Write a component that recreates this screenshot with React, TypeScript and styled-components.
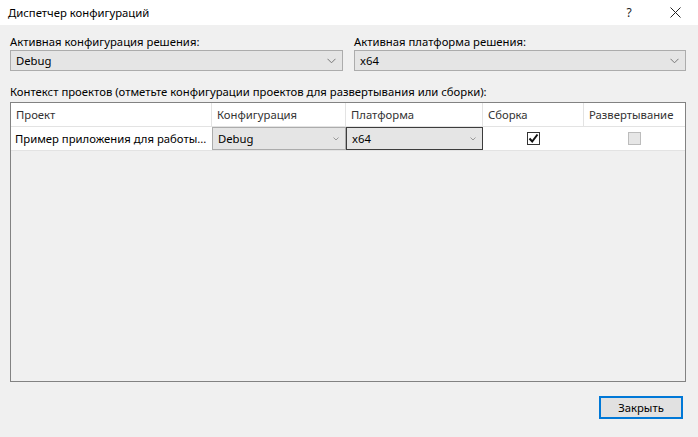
import React from "react";
import styled, { createGlobalStyle } from "styled-components";

const Global = createGlobalStyle`
  html, body { margin: 0; padding: 0; background: #f0f0f0; }
  body { font-family: "Noto Sans", "Open Sans", sans-serif; font-size: 11.3px; color: #000; }
  * { box-sizing: border-box; }
`;

const Window = styled.div`
  width: 698px;
  height: 437px;
  display: flex;
  flex-direction: column;
  background: #f0f0f0;
  overflow: hidden;
`;

const TitleBar = styled.div`
  height: 25px;
  background: #fff;
  display: flex;
  align-items: center;
  padding-left: 8px;
  font-size: 11.3px;
`;

const TitleText = styled.div`
  flex: 1;
`;

const TitleButton = styled.div<{ $w: number }>`
  width: ${(p) => p.$w}px;
  height: 25px;
  display: flex;
  align-items: center;
  justify-content: center;
  color: #222;
  font-size: 12px;
`;

const Body = styled.div`
  flex: 1;
  display: flex;
  flex-direction: column;
  padding: 8px 12px 0 10px;
`;

const TopRow = styled.div`
  display: grid;
  grid-template-columns: 333px 332px;
  column-gap: 11px;
`;

const Field = styled.div`
  display: flex;
  flex-direction: column;
`;

const Label = styled.div`
  height: 17px;
  line-height: 17px;
  white-space: nowrap;
`;

const Combo = styled.div<{ $dark?: boolean; $h?: number }>`
  height: ${(p) => p.$h ?? 21}px;
  flex: ${(p) => (p.$h ? 1 : "none")};
  background: #e5e5e5;
  border: 1px solid ${(p) => (p.$dark ? "#3c3c3c" : "#acacac")};
  display: flex;
  align-items: center;
  padding-left: 5px;
  padding-right: 6px;
  white-space: nowrap;
`;

const ComboText = styled.div`
  flex: 1;
`;

const ContextLabel = styled(Label)`
  margin-top: 12px;
`;

const Grid = styled.div`
  margin-top: 2px;
  height: 280px;
  border: 1px solid #828282;
  background: #f0f0f0;
  display: flex;
  flex-direction: column;
`;

const Row = styled.div<{ $h: number }>`
  display: grid;
  grid-template-columns: 201px 134px 137px 101px 1fr;
  height: ${(p) => p.$h}px;
  background: #fff;
  border-bottom: 1px solid #e3e3e3;
`;

const HeaderCell = styled.div<{ $last?: boolean }>`
  display: flex;
  align-items: center;
  padding-left: 5px;
  border-right: ${(p) => (p.$last ? "none" : "1px solid #e3e3e3")};
  color: #333;
  white-space: nowrap;
`;

const Cell = styled.div<{ $center?: boolean }>`
  display: flex;
  align-items: center;
  justify-content: ${(p) => (p.$center ? "center" : "flex-start")};
  padding-left: ${(p) => (p.$center ? 0 : 4)}px;
  white-space: nowrap;
  overflow: hidden;
`;

const CellCombo = styled.div`
  display: flex;
  align-items: stretch;
`;

const Check = styled.div<{ $disabled?: boolean }>`
  width: 13px;
  height: 13px;
  border: 1px solid ${(p) => (p.$disabled ? "#bcbcbc" : "#333")};
  background: ${(p) => (p.$disabled ? "#e6e6e6" : "#fff")};
  display: flex;
  align-items: center;
  justify-content: center;
`;

const Footer = styled.div`
  display: flex;
  justify-content: flex-end;
  padding: 14px 3px 0 0;
`;

const Button = styled.button`
  width: 84px;
  height: 23px;
  background: #e1e1e1;
  border: 2px solid #0078d7;
  font-family: inherit;
  font-size: 11.3px;
  color: #000;
  padding: 0;
`;

const Chevron = () => (
  <svg width="9" height="6" viewBox="0 0 9 6">
    <path d="M0.5 0.8 L4.5 4.8 L8.5 0.8" fill="none" stroke="#777" strokeWidth="1" />
  </svg>
);

const SmallChevron = () => (
  <svg width="6" height="4" viewBox="0 0 6 4">
    <path d="M0.5 0.5 L3 3 L5.5 0.5" fill="none" stroke="#999" strokeWidth="1" />
  </svg>
);

export default function App() {
  return (
    <>
      <Global />
      <Window>
        <TitleBar>
          <TitleText>Диспетчер конфигураций</TitleText>
          <TitleButton $w={46}>?</TitleButton>
          <TitleButton $w={46}>
            <svg width="11" height="11" viewBox="0 0 11 11">
              <path d="M0.5 0.5 L10.5 10.5 M10.5 0.5 L0.5 10.5" stroke="#222" strokeWidth="1" />
            </svg>
          </TitleButton>
        </TitleBar>
        <Body>
          <TopRow>
            <Field>
              <Label>Активная конфигурация решения:</Label>
              <Combo>
                <ComboText>Debug</ComboText>
                <Chevron />
              </Combo>
            </Field>
            <Field>
              <Label>Активная платформа решения:</Label>
              <Combo>
                <ComboText>x64</ComboText>
                <Chevron />
              </Combo>
            </Field>
          </TopRow>
          <ContextLabel>
            Контекст проектов (отметьте конфигурации проектов для развертывания или сборки):
          </ContextLabel>
          <Grid>
            <Row $h={24}>
              <HeaderCell>Проект</HeaderCell>
              <HeaderCell>Конфигурация</HeaderCell>
              <HeaderCell>Платформа</HeaderCell>
              <HeaderCell>Сборка</HeaderCell>
              <HeaderCell $last>Развертывание</HeaderCell>
            </Row>
            <Row $h={24}>
              <Cell>Пример приложения для работы...</Cell>
              <CellCombo>
                <Combo $h={23}>
                  <ComboText>Debug</ComboText>
                  <SmallChevron />
                </Combo>
              </CellCombo>
              <CellCombo>
                <Combo $h={23} $dark>
                  <ComboText>x64</ComboText>
                  <SmallChevron />
                </Combo>
              </CellCombo>
              <Cell $center>
                <Check>
                  <svg width="11" height="11" viewBox="0 0 11 11">
                    <path d="M1.5 5.5 L4.2 8.5 L9.5 1.5" fill="none" stroke="#111" strokeWidth="2" />
                  </svg>
                </Check>
              </Cell>
              <Cell $center>
                <Check $disabled />
              </Cell>
            </Row>
          </Grid>
          <Footer>
            <Button>Закрыть</Button>
          </Footer>
        </Body>
      </Window>
    </>
  );
}
